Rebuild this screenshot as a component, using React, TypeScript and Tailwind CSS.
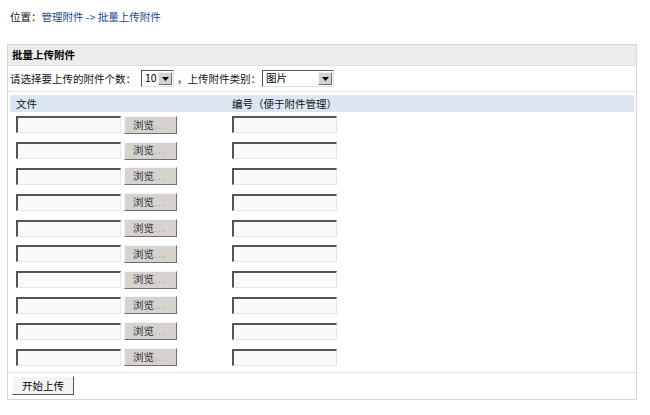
import React from "react"

const font = { fontFamily: '"Noto Sans CJK SC", "Liberation Sans", sans-serif' }

const TextBox = () => (
    <div className="w-[105px] h-[17px] bg-[#fafafa] border-t-2 border-l-2 border-t-[#555] border-l-[#555] border-b border-r border-b-[#e6e6e6] border-r-[#e6e6e6]" />
)

const BrowseButton = () => (
    <div className="w-[53px] h-[18px] bg-[#d6d3ce] border border-t-[#f4f4f4] border-l-[#f4f4f4] border-b-[#6f6f6f] border-r-[#6f6f6f] flex items-center pl-[8px] leading-none">
        <span className="text-[#333]">浏览</span>
        <span className="text-[#aaa] tracking-[1px]">...</span>
    </div>
)

const Select = ({ value, width }: { value: string, width: string }) => (
    <div className={"h-[17px] bg-white border border-t-[#555] border-l-[#555] border-b-[#e0e0e0] border-r-[#e0e0e0] flex items-center justify-between pl-[3px] leading-none " + width}>
        <span className="text-black">{value}</span>
        <div className="w-[14px] h-[13px] mr-[1px] bg-[#d6d3ce] border border-t-[#f4f4f4] border-l-[#f4f4f4] border-b-[#6f6f6f] border-r-[#6f6f6f] flex items-center justify-center">
            <svg width="7" height="4" viewBox="0 0 7 4"><polygon points="0,0 7,0 3.5,4" fill="#000" /></svg>
        </div>
    </div>
)

export default function App() {
    const rows = Array.from({ length: 10 })
    return (
        <div className="w-[650px] h-[415px] bg-white text-[10.5px] text-[#111] overflow-hidden" style={font}>
            <div className="pl-[10px] pt-[9px] h-[44px] leading-[16px]">
                位置：<span className="text-[#16478a]">管理附件 -&gt; 批量上传附件</span>
            </div>
            <div className="ml-[7px] w-[630px] border border-[#d6d6d6]">
                <div className="h-[21px] bg-[#ececec] border-b border-[#dedede] font-bold flex items-center pl-[4px] text-black">
                    批量上传附件
                </div>
                <div className="h-[26px] border-b border-[#e2e2e2] flex items-center pl-[2px]">
                    <span>请选择要上传的附件个数：</span>
                    <div className="ml-[5px]"><Select value="10" width="w-[33px]" /></div>
                    <span className="ml-[3px]">，上传附件类别：</span>
                    <div className="ml-[1px]"><Select value="图片" width="w-[72px]" /></div>
                </div>
                <div className="px-[2px] pt-[3px] pb-[2px]">
                    <div className="h-[17px] bg-[#dce6f1] flex items-center pl-[6px]">
                        <span className="w-[216px]">文件</span>
                        <span>编号（便于附件管理）</span>
                    </div>
                    {rows.map((_, i) => (
                        <div key={i} className="h-[25.8px] flex items-center pl-[6px]">
                            <div className="w-[216px] flex items-center gap-[3px]">
                                <TextBox />
                                <BrowseButton />
                            </div>
                            <TextBox />
                        </div>
                    ))}
                </div>
                <div className="h-[27px] border-t border-[#e0e0e0] flex items-center pl-[4px]">
                    <div className="w-[62px] h-[19px] bg-[#f4f4f4] border border-t-white border-l-white border-b-[#555] border-r-[#555] flex items-center justify-center text-black leading-none">
                        开始上传
                    </div>
                </div>
            </div>
        </div>
    )
}
